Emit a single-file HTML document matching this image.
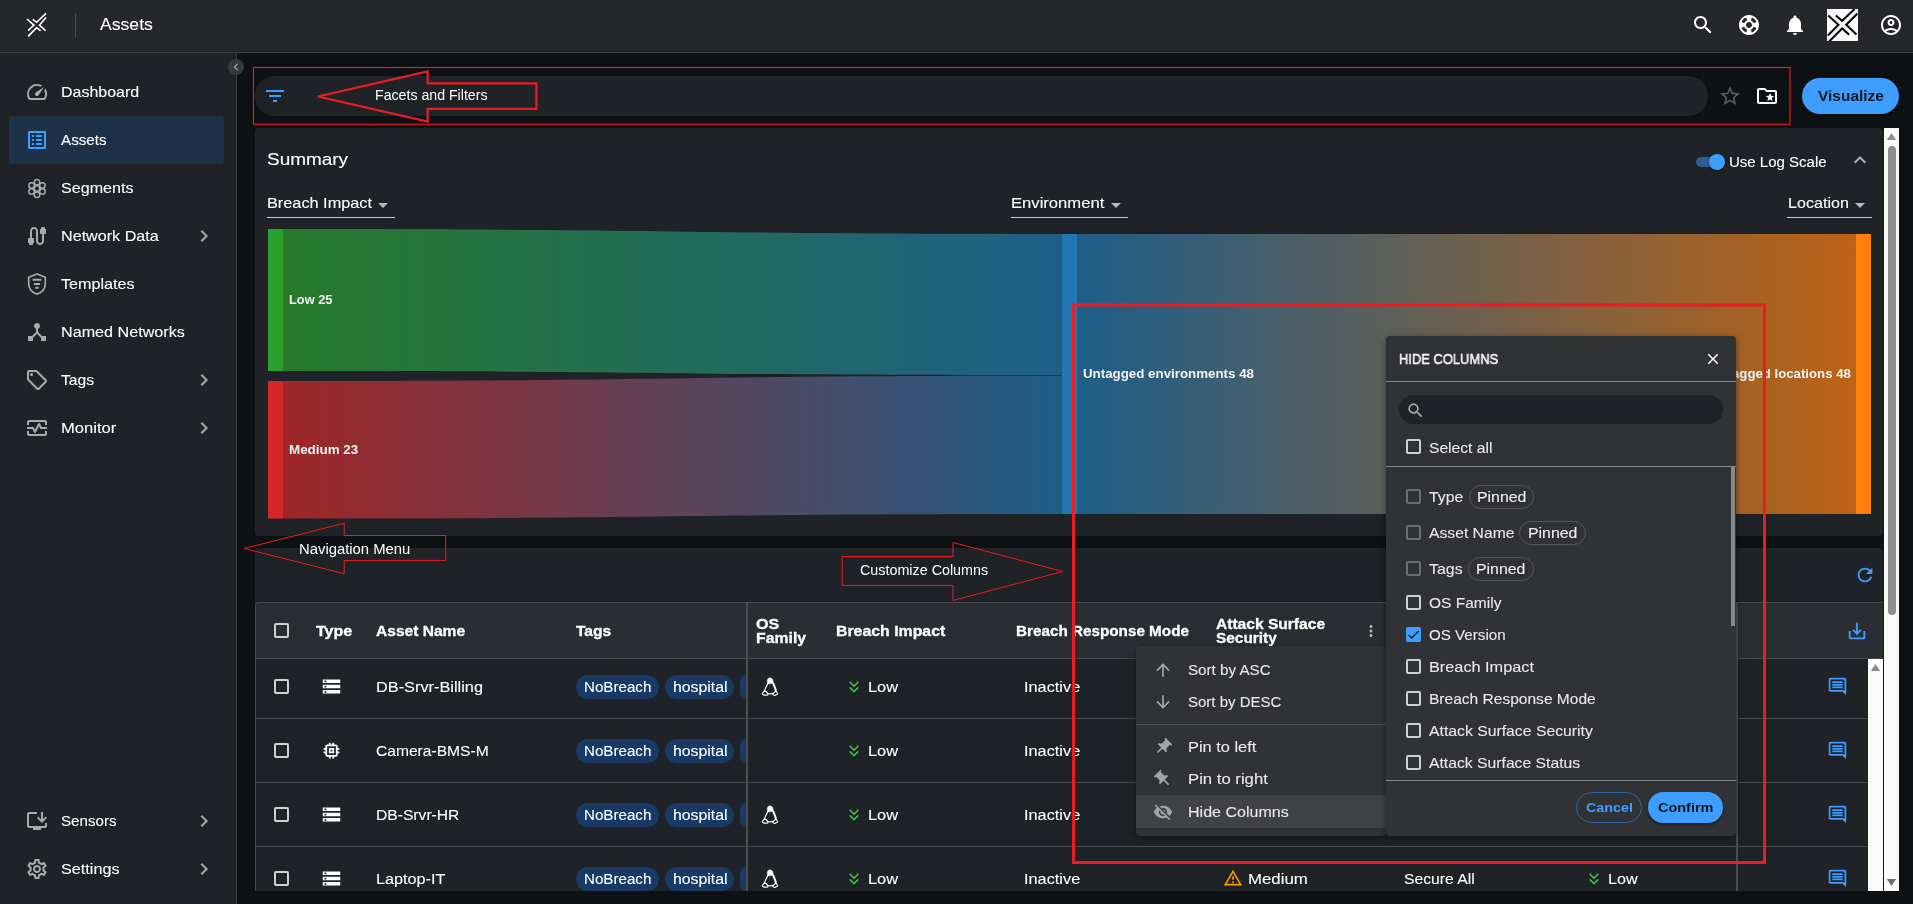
<!DOCTYPE html>
<html lang="en"><head><meta charset="utf-8"><title>Assets</title><style>
html,body{margin:0;padding:0}
body{width:1913px;height:904px;overflow:hidden;background:#0e1114;position:relative;font-family:"Liberation Sans",sans-serif;color:#fff}
.b,.i,.t,.cb{position:absolute;display:block;margin:0;padding:0}
.t{will-change:transform}
.t{white-space:nowrap;line-height:1;font-weight:400;text-decoration:none;transform-origin:0 50%;-webkit-text-stroke:.1px}
.i{overflow:visible}
.cb{width:15px;height:15px;box-sizing:border-box;border:2px solid #cfd0d1;border-radius:2px}
button.b{border:0;outline:0;background:transparent;font:inherit;text-align:left;overflow:visible}
</style></head>
<body>
<header class="b" style="left:0;top:0;width:1913px;height:52px;background:#26272b;border-bottom:1px solid #3d3e42">
<svg class="i" style="left:20px;top:6px;width:36px;height:38px" viewBox="0 0 36 38" fill="none" stroke="#fff" stroke-width="1.600" stroke-linejoin="miter">
<path d="M7.100 13.200 L13.900 19.100 L8.100 24.700"/><path d="M12.700 13.400 L16.600 16.300 L26 7.300"/><path d="M26 11.600 L19.500 19.100 L25.500 24.600"/><path d="M8.100 30.400 L16.600 21.600 L20.600 24.800"/></svg>
<div class="b" style="left:75px;top:13px;width:1px;height:24px;background:#4b4c50"></div>
<h1 class="t" style="left:100.0px;top:16.6px;font-size:16px;transform:scaleX(1.100);">Assets</h1>
<svg class="i" style="left:1690.5px;top:12.5px;width:24px;height:24px;" viewBox="0 0 24 24" fill="#fff"><path d="M15.5 14h-.79l-.28-.27C15.41 12.59 16 11.11 16 9.5 16 5.91 13.09 3 9.5 3S3 5.91 3 9.5 5.91 16 9.5 16c1.61 0 3.09-.59 4.23-1.57l.27.28v.79l5 4.99L20.49 19l-4.99-5zm-6 0C7.01 14 5 11.99 5 9.5S7.01 5 9.5 5 14 7.01 14 9.5 11.99 14 9.5 14z"/></svg>
<svg class="i" style="left:1737.0px;top:13.0px;width:24px;height:24px;" viewBox="0 0 24 24" fill="#fff"><path d="M12 2C6.48 2 2 6.48 2 12s4.48 10 10 10 10-4.48 10-10S17.52 2 12 2zm7.46 7.12l-2.78 1.15c-.51-1.36-1.58-2.44-2.95-2.94l1.15-2.78c2.1.8 3.77 2.47 4.58 4.57zM12 15c-1.66 0-3-1.34-3-3s1.34-3 3-3 3 1.34 3 3-1.34 3-3 3zM9.13 4.54l1.17 2.78c-1.38.5-2.47 1.59-2.98 2.97L4.54 9.13c.81-2.11 2.48-3.78 4.59-4.59zM4.54 14.87l2.78-1.15c.51 1.38 1.59 2.46 2.97 2.96l-1.17 2.78c-2.1-.81-3.77-2.48-4.58-4.59zm10.34 4.59l-1.15-2.78c1.37-.51 2.45-1.59 2.95-2.97l2.78 1.17c-.81 2.1-2.48 3.77-4.58 4.58z"/></svg>
<svg class="i" style="left:1783.0px;top:13.0px;width:24px;height:24px;" viewBox="0 0 24 24" fill="#fff"><path d="M12 22c1.1 0 2-.9 2-2h-4c0 1.1.89 2 2 2zm6-6v-5c0-3.07-1.64-5.64-4.5-6.32V4c0-.83-.67-1.5-1.5-1.5s-1.5.67-1.5 1.5v.68C7.63 5.36 6 7.92 6 11v5l-2 2v1h16v-1l-2-2z"/></svg>
<svg class="i" style="left:1827px;top:8.800px;width:31.300px;height:32.300px;overflow:hidden" viewBox="0 0 31.300 32.300"><rect width="31.300" height="32.300" fill="#f9f9f9"/>
<g stroke="#0a0a0a" fill="none" stroke-width="2.100"><path d="M1.200 6.500 L11.400 15.800 L0.900 26.500"/><path d="M8.800 6.500 L15.100 11.850 L27.600 0"/><path d="M30.400 4.600 L19.300 15.800 L29.500 25.600"/><path d="M2.100 32.500 L15.100 19.500 L22.100 25.600"/></g></svg>
<svg class="i" style="left:1879.0px;top:13.0px;width:24px;height:24px;" viewBox="0 0 24 24" fill="#fff"><path d="M12 2C6.48 2 2 6.48 2 12s4.48 10 10 10 10-4.48 10-10S17.52 2 12 2zM7.35 18.5C8.66 17.56 10.26 17 12 17s3.34.56 4.65 1.5c-1.31.94-2.91 1.5-4.65 1.5s-3.34-.56-4.65-1.5zm10.79-1.38C16.45 15.8 14.32 15 12 15s-4.45.8-6.14 2.12C4.7 15.73 4 13.95 4 12c0-4.42 3.58-8 8-8s8 3.58 8 8c0 1.95-.7 3.73-1.86 5.12zM12 6c-1.93 0-3.5 1.57-3.5 3.5S10.07 13 12 13s3.5-1.57 3.5-3.5S13.93 6 12 6zm0 5c-.83 0-1.5-.67-1.5-1.5S11.17 8 12 8s1.5.67 1.5 1.5S12.83 11 12 11z"/></svg>
</header>
<nav class="b" style="left:0;top:53px;width:236px;height:851px;background:#1f2226;border-right:1px solid #3a3c40">
</nav>
<div class="b" style="left:9px;top:116px;width:215px;height:48px;background:#1d3148;border-radius:4px"></div>
<svg class="i" style="left:25.0px;top:80.0px;width:24px;height:24px;" viewBox="0 0 24 24" fill="#a9aaab"><path d="M20.38 8.57l-1.230 1.850a8 8 0 0 1-.220 7.580H5.070A8 8 0 0 1 15.580 6.850l1.850-1.230A10 10 0 0 0 3.350 19a2 2 0 0 0 1.720 1h13.850a2 2 0 0 0 1.740-1 10 10 0 0 0-.270-10.440zm-9.790 6.840a2 2 0 0 0 2.830 0l5.660-8.490-8.490 5.660a2 2 0 0 0 0 2.830z"/></svg>
<a class="t" style="left:61.2px;top:83.9px;font-size:15px;transform:scaleX(1.064);">Dashboard</a>
<svg class="i" style="left:25.0px;top:128.0px;width:24px;height:24px;" viewBox="0 0 24 24" fill="#3d9eff"><path d="M11 7h6v2h-6zm0 4h6v2h-6zm0 4h6v2h-6zM7 7h2v2H7zm0 4h2v2H7zm0 4h2v2H7zM20.1 3H3.9c-.5 0-.9.4-.9.9v16.2c0 .4.4.9.9.9h16.2c.4 0 .9-.5.9-.9V3.9c0-.5-.5-.9-.9-.9zM19 19H5V5h14v14z"/></svg>
<a class="t" style="left:61.2px;top:131.9px;font-size:15px;transform:scaleX(1.013);">Assets</a>
<svg class="i" style="left:27px;top:177.5px;width:20px;height:21px" viewBox="0 0 20 21" fill="none" stroke="#a9aaab" stroke-width="1.500"><circle cx="10" cy="10.500" r="2.750"/><circle cx="10" cy="4.300" r="2.750"/><circle cx="10" cy="16.700" r="2.750"/><circle cx="4.600" cy="7.400" r="2.750"/><circle cx="15.400" cy="7.400" r="2.750"/><circle cx="4.600" cy="13.600" r="2.750"/><circle cx="15.400" cy="13.600" r="2.750"/></svg>
<a class="t" style="left:61.2px;top:179.9px;font-size:15px;transform:scaleX(1.073);">Segments</a>
<svg class="i" style="left:25.0px;top:224.0px;width:24px;height:24px;" viewBox="0 0 24 24" fill="#a9aaab"><path d="M20 5V4c0-.55-.45-1-1-1h-2c-.55 0-1 .45-1 1v1h-1v4c0 .55.45 1 1 1h1v7c0 1.100-.9 2-2 2s-2-.9-2-2V7c0-2.210-1.790-4-4-4S5 4.790 5 7v7H4c-.55 0-1 .45-1 1v4h1v1c0 .55.45 1 1 1h2c.55 0 1-.45 1-1v-1h1v-4c0-.55-.45-1-1-1H7V7c0-1.100.9-2 2-2s2 .9 2 2v10c0 2.210 1.790 4 4 4s4-1.790 4-4v-7h1c.55 0 1-.45 1-1V5h-1z"/></svg>
<a class="t" style="left:61.2px;top:227.9px;font-size:15px;transform:scaleX(1.076);">Network Data</a>
<svg class="i" style="left:192.0px;top:224.0px;width:24px;height:24px;" viewBox="0 0 24 24" fill="#a9aaab"><path d="M10 6L8.59 7.41 13.17 12l-4.58 4.59L10 18l6-6z"/></svg>
<svg class="i" style="left:26px;top:272px;width:22px;height:24px" viewBox="0 0 22 24" fill="none" stroke="#a9aaab" stroke-width="1.700"><path d="M11 2 L19.300 5.300 V11.500 C19.300 16.700 15.800 20.500 11 22.100 C6.200 20.500 2.700 16.700 2.700 11.500 V5.300 Z" stroke-linejoin="round"/><path d="M6.600 7.700 H15.400 M7.900 11.900 H14.100 M9.300 15.800 H12.700" stroke-width="2"/></svg>
<a class="t" style="left:61.2px;top:275.9px;font-size:15px;transform:scaleX(1.076);">Templates</a>
<svg class="i" style="left:25.0px;top:320.0px;width:24px;height:24px;" viewBox="0 0 24 24" fill="#a9aaab"><path d="M17 16l-4-4V8.820C14.160 8.400 15 7.300 15 6c0-1.660-1.340-3-3-3S9 4.340 9 6c0 1.300.84 2.400 2 2.820V12l-4 4H3v5h5v-3.050l4-4.200 4 4.200V21h5v-5h-4z"/></svg>
<a class="t" style="left:61.2px;top:323.9px;font-size:15px;transform:scaleX(1.076);">Named Networks</a>
<svg class="i" style="left:25.0px;top:368.0px;width:24px;height:24px;" viewBox="0 0 24 24" fill="#a9aaab"><path d="M21.41 11.58l-9-9C12.05 2.220 11.550 2 11 2H4c-1.100 0-2 .9-2 2v7c0 .55.22 1.050.59 1.420l9 9c.36.36.86.58 1.410.58s1.050-.22 1.410-.59l7-7c.37-.36.59-.86.59-1.410s-.23-1.060-.59-1.420zM13 20.010L4 11V4h7v-.01l9 9-7 7.020z M6.500 5a1.500 1.500 0 1 0 0 3 1.500 1.500 0 0 0 0-3z"/></svg>
<a class="t" style="left:61.2px;top:371.9px;font-size:15px;transform:scaleX(1.048);">Tags</a>
<svg class="i" style="left:192.0px;top:368.0px;width:24px;height:24px;" viewBox="0 0 24 24" fill="#a9aaab"><path d="M10 6L8.59 7.41 13.17 12l-4.58 4.59L10 18l6-6z"/></svg>
<svg class="i" style="left:25.0px;top:416.0px;width:24px;height:24px;" viewBox="0 0 24 24" fill="#a9aaab"><path d="M20 4H4c-1.100 0-2 .9-2 2v3h2V6h16v3h2V6c0-1.100-.9-2-2-2zM20 18H4v-3H2v3c0 1.100.9 2 2 2h16c1.100 0 2-.9 2-2v-3h-2v3z M14.890 7.550c-.34-.68-1.450-.68-1.790 0L10 13.760l-1.110-2.210A.988.988 0 0 0 8 11H2v2h5.380l1.720 3.450c.18.34.52.55.9.55s.72-.21.890-.55L14 10.240l1.110 2.210c.17.34.51.55.89.55h6v-2h-5.380l-1.730-3.450z"/></svg>
<a class="t" style="left:61.2px;top:419.9px;font-size:15px;transform:scaleX(1.105);">Monitor</a>
<svg class="i" style="left:192.0px;top:416.0px;width:24px;height:24px;" viewBox="0 0 24 24" fill="#a9aaab"><path d="M10 6L8.59 7.41 13.17 12l-4.58 4.59L10 18l6-6z"/></svg>
<svg class="i" style="left:25.0px;top:809.0px;width:24px;height:24px;" viewBox="0 0 24 24" fill="#a9aaab"><path d="M20 17H4V5h8V3H4c-1.110 0-2 .89-2 2v12c0 1.100.89 2 2 2h4v2h8v-2h4c1.100 0 2-.9 2-2v-3h-2v3z M17 14l5-5-1.410-1.410L18 10.170V3h-2v7.170l-2.590-2.580L12 9z"/></svg>
<a class="t" style="left:61.2px;top:812.9px;font-size:15px;transform:scaleX(1.009);">Sensors</a>
<svg class="i" style="left:192.0px;top:809.0px;width:24px;height:24px;" viewBox="0 0 24 24" fill="#a9aaab"><path d="M10 6L8.59 7.41 13.17 12l-4.58 4.59L10 18l6-6z"/></svg>
<svg class="i" style="left:25.0px;top:857.0px;width:24px;height:24px;" viewBox="0 0 24 24" fill="#a9aaab"><path d="M19.43 12.98c.04-.32.07-.64.07-.98 0-.34-.03-.66-.07-.98l2.110-1.650c.19-.15.24-.42.12-.64l-2-3.460c-.09-.16-.26-.25-.44-.25-.06 0-.12.01-.17.03l-2.490 1c-.52-.4-1.080-.73-1.690-.98l-.38-2.650C14.460 2.180 14.250 2 14 2h-4c-.25 0-.46.18-.49.42l-.38 2.650c-.61.25-1.170.59-1.690.98l-2.490-1c-.06-.02-.12-.03-.18-.03-.17 0-.34.09-.43.25l-2 3.460c-.13.22-.07.49.12.64l2.110 1.650c-.04.32-.07.65-.07.98 0 .33.03.66.07.98l-2.110 1.650c-.19.15-.24.42-.12.64l2 3.460c.09.16.26.25.44.25.06 0 .12-.01.17-.03l2.490-1c.52.4 1.080.73 1.690.98l.38 2.650c.03.24.24.42.49.42h4c.25 0 .46-.18.49-.42l.38-2.650c.61-.25 1.170-.59 1.690-.98l2.490 1c.06.02.12.03.18.03.17 0 .34-.09.43-.25l2-3.460c.12-.22.07-.49-.12-.64l-2.110-1.650zm-1.980-1.710c.04.31.05.52.05.73 0 .21-.02.43-.05.73l-.14 1.130.89.7 1.080.84-.7 1.210-1.270-.51-1.040-.42-.9.68c-.43.32-.84.56-1.250.73l-1.060.43-.16 1.130-.2 1.350h-1.400l-.19-1.350-.16-1.130-1.060-.43c-.43-.18-.83-.41-1.230-.71l-.91-.7-1.060.43-1.270.51-.7-1.210 1.080-.84.89-.7-.14-1.130c-.03-.31-.05-.54-.05-.74s.02-.43.05-.73l.14-1.130-.89-.7-1.080-.84.7-1.210 1.270.51 1.040.42.9-.68c.43-.32.84-.56 1.250-.73l1.060-.43.16-1.130.2-1.350h1.390l.19 1.350.16 1.130 1.060.43c.43.18.83.41 1.230.71l.91.7 1.060-.43 1.270-.51.7 1.210-1.070.85-.89.7.14 1.130zM12 8c-2.210 0-4 1.790-4 4s1.790 4 4 4 4-1.790 4-4-1.790-4-4-4zm0 6c-1.100 0-2-.9-2-2s.9-2 2-2 2 .9 2 2-.9 2-2 2z"/></svg>
<a class="t" style="left:61.2px;top:860.9px;font-size:15px;transform:scaleX(1.079);">Settings</a>
<svg class="i" style="left:192.0px;top:857.0px;width:24px;height:24px;" viewBox="0 0 24 24" fill="#a9aaab"><path d="M10 6L8.59 7.41 13.17 12l-4.58 4.59L10 18l6-6z"/></svg>
<div class="b" style="left:227.8px;top:58.9px;width:16.0px;height:16.000000000000007px;background:#37393c;border-radius:50%"></div>
<svg class="i" style="left:228.6px;top:60.0px;width:14px;height:14px;" viewBox="0 0 24 24" fill="#a9aaab"><path d="M15.41 7.41L14 6l-6 6 6 6 1.41-1.41L10.83 12z"/></svg>
<div class="b" style="left:255px;top:76px;width:1453px;height:40px;background:#1f2226;border-radius:20px"></div>
<svg class="i" style="left:263.0px;top:84.0px;width:24px;height:24px;" viewBox="0 0 24 24" fill="#3d9eff"><path d="M10 18h4v-2h-4v2zM3 6v2h18V6H3zm3 7h12v-2H6v2z"/></svg>
<svg class="i" style="left:1718.0px;top:84.0px;width:24px;height:24px;" viewBox="0 0 24 24" fill="#5d5e60"><path d="M22 9.24l-7.19-.62L12 2 9.19 8.63 2 9.24l5.46 4.73L5.82 21 12 17.27 18.18 21l-1.63-7.03L22 9.24zM12 15.4l-3.76 2.27 1-4.28-3.32-2.88 4.38-.38L12 6.1l1.71 4.04 4.38.38-3.32 2.88 1 4.28L12 15.4z"/></svg>
<svg class="i" style="left:1755.0px;top:84.0px;width:24px;height:24px;" viewBox="0 0 24 24" fill="#fff"><path d="M20 6h-8l-2-2H4c-1.1 0-1.99.9-1.99 2L2 18c0 1.1.9 2 2 2h16c1.1 0 2-.9 2-2V8c0-1.1-.9-2-2-2zm0 12H4V6h5.17l2 2H20v10zm-6.92-3.96L12.39 17 15 15.47 17.61 17l-.69-2.96 2.3-1.99-3.03-.26L15 9l-1.19 2.79-3.03.26z"/></svg>
<button class="b" style="left:1802px;top:78px;width:97px;height:36px;background:#3d9eff;border-radius:18px;box-shadow:0 2px 3px rgba(0,0,0,.4)"><span class="t" style="left:16.0px;top:10.0px;font-size:15px;font-weight:700;-webkit-text-stroke:0;color:#10161d;transform:scaleX(1.032);">Visualize</span></button>
<section class="b" style="left:255px;top:128px;width:1628px;height:408px;background:#1f2226;border-radius:4px"></section>
<h2 class="t" style="left:266.9px;top:150.6px;font-size:17px;transform:scaleX(1.115);">Summary</h2>
<div class="b" style="left:1696px;top:157px;width:27px;height:10px;background:#2c5f94;border-radius:5px"></div>
<div class="b" style="left:1709px;top:154px;width:16px;height:16px;background:#3d9eff;border-radius:50%;box-shadow:0 1px 2px rgba(0,0,0,.5)"></div>
<span class="t" style="left:1729.2px;top:154.7px;font-size:14px;transform:scaleX(1.072);">Use Log Scale</span>
<svg class="i" style="left:1848.0px;top:148.0px;width:24px;height:24px;" viewBox="0 0 24 24" fill="#b4b5b6"><path d="M12 8l-6 6 1.41 1.41L12 10.83l4.59 4.58L18 14z"/></svg>
<span class="t" style="left:266.7px;top:195.6px;font-size:14.5px;transform:scaleX(1.123);">Breach Impact</span>
<svg class="i" style="left:371.0px;top:193.0px;width:24px;height:24px;" viewBox="0 0 24 24" fill="#b9babb"><path d="M7 10l5 5 5-5z"/></svg>
<div class="b" style="left:267px;top:217px;width:128px;height:1px;background:#cdcdce"></div>
<span class="t" style="left:1011.2px;top:195.6px;font-size:14.5px;transform:scaleX(1.146);">Environment</span>
<svg class="i" style="left:1104.0px;top:193.0px;width:24px;height:24px;" viewBox="0 0 24 24" fill="#b9babb"><path d="M7 10l5 5 5-5z"/></svg>
<div class="b" style="left:1011px;top:217px;width:117px;height:1px;background:#cdcdce"></div>
<span class="t" style="left:1787.6px;top:195.6px;font-size:14.5px;transform:scaleX(1.111);">Location</span>
<svg class="i" style="left:1848.0px;top:193.0px;width:24px;height:24px;" viewBox="0 0 24 24" fill="#b9babb"><path d="M7 10l5 5 5-5z"/></svg>
<div class="b" style="left:1787px;top:217px;width:85px;height:1px;background:#cdcdce"></div>
<svg class="i" style="left:255px;top:220px;width:1628px;height:310px" viewBox="255 220 1628 310">
<defs><linearGradient id="g1" x1="283" x2="1062" y1="0" y2="0" gradientUnits="userSpaceOnUse"><stop offset="0" stop-color="#287a2a"/><stop offset="1" stop-color="#1f5e89"/></linearGradient><linearGradient id="g2" x1="283" x2="1062" y1="0" y2="0" gradientUnits="userSpaceOnUse"><stop offset="0" stop-color="#9f2627"/><stop offset="1" stop-color="#1f5e89"/></linearGradient><linearGradient id="g3" x1="1077" x2="1856" y1="0" y2="0" gradientUnits="userSpaceOnUse"><stop offset="0" stop-color="#1f5e89"/><stop offset="1" stop-color="#bc6315"/></linearGradient></defs>
<path fill="url(#g1)" d="M283 229 C672.5 229 672.5 234 1062 234 V375.300 C672.500 375.300 672.500 371 283 371 Z"/>
<path fill="url(#g2)" d="M283 381 C672.500 381 672.500 375.700 1062 375.700 V514 C672.500 514 672.500 518.600 283 518.600 Z"/>
<path fill="url(#g3)" d="M1077 234 H1856 V514 H1077 Z"/>
<rect x="268" y="229" width="15" height="142" fill="#2ca02c"/><rect x="268" y="381" width="15" height="137.600" fill="#d62728"/><rect x="1062" y="234" width="15" height="280" fill="#1f77b4"/><rect x="1856" y="234" width="15" height="280" fill="#ff7f0e"/>
</svg>
<span class="t" style="left:289.0px;top:294.0px;font-size:12px;font-weight:700;-webkit-text-stroke:0;color:#f3f3f3;transform:scaleX(1.069);">Low 25</span>
<span class="t" style="left:289.0px;top:443.8px;font-size:12px;font-weight:700;-webkit-text-stroke:0;color:#f3f3f3;transform:scaleX(1.117);">Medium 23</span>
<span class="t" style="left:1082.7px;top:368.0px;font-size:12px;font-weight:700;-webkit-text-stroke:0;color:#f3f3f3;transform:scaleX(1.110);">Untagged environments 48</span>
<span class="t" style="left:1710.2px;top:368.0px;font-size:12px;font-weight:700;-webkit-text-stroke:0;color:#f3f3f3;transform:scaleX(1.100);">Untagged locations 48</span>
<section class="b" style="left:255px;top:548px;width:1628px;height:343px;background:#1f2226;border-radius:4px 4px 0 0"></section>
<svg class="i" style="left:1853.5px;top:564.0px;width:22px;height:22px;" viewBox="0 0 24 24" fill="#3d9eff"><path d="M17.65 6.35C16.2 4.9 14.21 4 12 4c-4.42 0-7.99 3.58-7.99 8s3.57 8 7.99 8c3.73 0 6.84-2.55 7.73-6h-2.08c-.82 2.33-3.04 4-5.65 4-3.31 0-6-2.69-6-6s2.69-6 6-6c1.66 0 3.14.69 4.22 1.78L13 11h7V4l-2.35 2.35z"/></svg>
<div class="b" style="left:255px;top:602px;width:1628px;height:57px;background:#2a2d31;border-top:1px solid #47494d;border-bottom:1px solid #47494d;border-left:1px solid #47494d;box-sizing:border-box;border-radius:4px 0 0 0"></div>
<div class="b" style="left:255px;top:658px;width:1px;height:233px;background:#47494d"></div>
<div class="b" style="left:256px;top:718px;width:1612px;height:1px;background:#47494d"></div>
<div class="b" style="left:256px;top:782px;width:1612px;height:1px;background:#47494d"></div>
<div class="b" style="left:256px;top:846px;width:1612px;height:1px;background:#47494d"></div>
<div class="b" style="left:746px;top:603px;width:2px;height:288px;background:#4b4d51"></div>
<div class="b" style="left:1736px;top:603px;width:2px;height:288px;background:#4b4d51"></div>
<span class="cb" style="left:273.5px;top:623.0px;border-color:#cfd0d1"></span>
<span class="t" style="left:315.7px;top:623.0px;font-size:15px;font-weight:700;-webkit-text-stroke:.3px;transform:scaleX(1.071);">Type</span>
<span class="t" style="left:375.7px;top:623.0px;font-size:15px;font-weight:700;-webkit-text-stroke:.3px;transform:scaleX(1.037);">Asset Name</span>
<span class="t" style="left:576.0px;top:623.0px;font-size:15px;font-weight:700;-webkit-text-stroke:.3px;transform:scaleX(1.038);">Tags</span>
<span class="t" style="left:755.7px;top:616.0px;font-size:15px;font-weight:700;-webkit-text-stroke:.3px;transform:scaleX(1.074);">OS</span>
<span class="t" style="left:755.7px;top:629.8px;font-size:15px;font-weight:700;-webkit-text-stroke:.3px;transform:scaleX(1.054);">Family</span>
<span class="t" style="left:835.7px;top:623.0px;font-size:15px;font-weight:700;-webkit-text-stroke:.3px;transform:scaleX(1.057);">Breach Impact</span>
<span class="t" style="left:1015.9px;top:623.0px;font-size:15px;font-weight:700;-webkit-text-stroke:.3px;transform:scaleX(1.017);">Breach Response Mode</span>
<span class="t" style="left:1216.0px;top:615.8px;font-size:15px;font-weight:700;-webkit-text-stroke:.3px;transform:scaleX(1.038);">Attack Surface</span>
<span class="t" style="left:1216.0px;top:629.6px;font-size:15px;font-weight:700;-webkit-text-stroke:.3px;transform:scaleX(1.027);">Security</span>
<svg class="i" style="left:1361.6px;top:622.0px;width:18px;height:18px;" viewBox="0 0 24 24" fill="#b4b5b6"><path d="M12 8c1.1 0 2-.9 2-2s-.9-2-2-2-2 .9-2 2 .9 2 2 2zm0 2c-1.1 0-2 .9-2 2s.9 2 2 2 2-.9 2-2-.9-2-2-2zm0 6c-1.1 0-2 .9-2 2s.9 2 2 2 2-.9 2-2-.9-2-2-2z"/></svg>
<svg class="i" style="left:1846.0px;top:620.0px;width:22px;height:22px;" viewBox="0 0 24 24" fill="#3d9eff"><path d="M19 12v7H5v-7H3v7c0 1.100.9 2 2 2h14c1.100 0 2-.9 2-2v-7h-2zm-6 .67l2.590-2.580L17 11.500l-5 5-5-5 1.410-1.410L11 12.670V3h2v9.670z"/></svg>
<div class="b" style="left:256px;top:659px;width:1612px;height:232px;overflow:hidden">
<span class="cb" style="left:17.5px;top:20.0px;border-color:#cfd0d1"></span>
<svg class="i" style="left:64.5px;top:17.0px;width:21px;height:21px;" viewBox="0 0 24 24" fill="#fff"><path d="M2 20h20v-4H2v4zm2-3h2v2H4v-2zM2 4v4h20V4H2zm4 3H4V5h2v2zm-4 7h20v-4H2v4zm2-3h2v2H4v-2z"/></svg>
<span class="t" style="left:119.7px;top:19.9px;font-size:15.5px;transform:scaleX(1.053);">DB-Srvr-Billing</span>
<div class="b" style="left:320px;top:15.5px;width:83px;height:24.0px;background:#173b65;border-radius:12px"></div>
<span class="t" style="left:328.0px;top:20.6px;font-size:14px;transform:scaleX(1.082);">NoBreach</span>
<div class="b" style="left:409px;top:15.5px;width:69px;height:24.0px;background:#173b65;border-radius:12px"></div>
<span class="t" style="left:416.5px;top:20.6px;font-size:14px;transform:scaleX(1.129);">hospital</span>
<div class="b" style="left:484px;top:15.5px;width:6px;height:24.0px;background:#173b65;border-radius:12px 0 0 12px"></div>
<svg class="i" style="left:500px;top:15.0px;width:28px;height:26px" viewBox="0 0 28 26" fill="none" stroke="#fff" stroke-width="1.100" stroke-linejoin="round" stroke-linecap="round"><path d="M11.700 9.700 C10.900 6.200 11.400 3.900 14 3.900 C16.600 3.900 17.100 6 17 8 L17.500 10.200 C16.200 8.900 14.400 8.900 13.400 10.100 C12.800 9.400 12.200 9.400 11.700 9.700 Z" fill="#fff" stroke-width=".6"/><path d="M11.900 9.300 C10.700 12.200 8.900 14.600 8.400 17.100"/><path d="M17.300 9.600 C18.300 12 19.700 14.600 19.900 17.300" stroke-width="2"/><path d="M11.600 19.400 C13.200 20 15.400 20 17 19.200"/><path d="M8.400 16.900 L6.300 19.500 C6.700 21.200 10 21.700 12 20.700 C11.500 18.900 10.100 17.200 8.400 16.900 Z"/><path d="M20.100 17.300 L21.800 19.500 C21 21.400 18 21.900 16.800 20.700 C17.300 19.200 18.400 17.800 20.100 17.300 Z"/></svg>
<svg class="i" style="left:588.0px;top:17.8px;width:20px;height:20px;" viewBox="0 0 24 24" fill="#3fbf4f"><path d="M18 6.41L16.59 5 12 9.58 7.41 5 6 6.41l6 6z M18 13l-1.41-1.41L12 16.17l-4.59-4.58L6 13l6 6z"/></svg>
<span class="t" style="left:612.2px;top:20.0px;font-size:15.5px;transform:scaleX(1.058);">Low</span>
<span class="t" style="left:767.9px;top:20.0px;font-size:15.5px;transform:scaleX(1.052);">Inactive</span>
<svg class="i" style="left:1570.8px;top:16.7px;width:21px;height:21px;" viewBox="0 0 24 24" fill="#3d9eff"><path d="M21.99 4c0-1.1-.89-2-1.99-2H4c-1.1 0-2 .9-2 2v12c0 1.1.9 2 2 2h14l4 4-.01-18zM20 4v13.170L18.830 16H4V4h16zM6 12h12v2H6zm0-3h12v2H6zm0-3h12v2H6z"/></svg>
<span class="cb" style="left:17.5px;top:84.0px;border-color:#cfd0d1"></span>
<svg class="i" style="left:64.5px;top:81.0px;width:21px;height:21px;" viewBox="0 0 24 24" fill="#fff"><path d="M15 9H9v6h6V9zm-2 4h-2v-2h2v2zm8-2V9h-2V7c0-1.100-.9-2-2-2h-2V3h-2v2h-2V3H9v2H7c-1.100 0-2 .9-2 2v2H3v2h2v2H3v2h2v2c0 1.100.9 2 2 2h2v2h2v-2h2v2h2v-2h2c1.100 0 2-.9 2-2v-2h2v-2h-2v-2h2zm-4 6H7V7h10v10z"/></svg>
<span class="t" style="left:119.7px;top:83.9px;font-size:15.5px;transform:scaleX(1.006);">Camera-BMS-M</span>
<div class="b" style="left:320px;top:79.5px;width:83px;height:24.0px;background:#173b65;border-radius:12px"></div>
<span class="t" style="left:328.0px;top:84.6px;font-size:14px;transform:scaleX(1.082);">NoBreach</span>
<div class="b" style="left:409px;top:79.5px;width:69px;height:24.0px;background:#173b65;border-radius:12px"></div>
<span class="t" style="left:416.5px;top:84.6px;font-size:14px;transform:scaleX(1.129);">hospital</span>
<div class="b" style="left:484px;top:79.5px;width:6px;height:24.0px;background:#173b65;border-radius:12px 0 0 12px"></div>
<svg class="i" style="left:588.0px;top:81.8px;width:20px;height:20px;" viewBox="0 0 24 24" fill="#3fbf4f"><path d="M18 6.41L16.59 5 12 9.58 7.41 5 6 6.41l6 6z M18 13l-1.41-1.41L12 16.17l-4.59-4.58L6 13l6 6z"/></svg>
<span class="t" style="left:612.2px;top:84.0px;font-size:15.5px;transform:scaleX(1.058);">Low</span>
<span class="t" style="left:767.9px;top:84.0px;font-size:15.5px;transform:scaleX(1.052);">Inactive</span>
<svg class="i" style="left:1570.8px;top:80.7px;width:21px;height:21px;" viewBox="0 0 24 24" fill="#3d9eff"><path d="M21.99 4c0-1.1-.89-2-1.99-2H4c-1.1 0-2 .9-2 2v12c0 1.1.9 2 2 2h14l4 4-.01-18zM20 4v13.170L18.830 16H4V4h16zM6 12h12v2H6zm0-3h12v2H6zm0-3h12v2H6z"/></svg>
<span class="cb" style="left:17.5px;top:148.0px;border-color:#cfd0d1"></span>
<svg class="i" style="left:64.5px;top:145.0px;width:21px;height:21px;" viewBox="0 0 24 24" fill="#fff"><path d="M2 20h20v-4H2v4zm2-3h2v2H4v-2zM2 4v4h20V4H2zm4 3H4V5h2v2zm-4 7h20v-4H2v4zm2-3h2v2H4v-2z"/></svg>
<span class="t" style="left:119.7px;top:147.9px;font-size:15.5px;transform:scaleX(1.009);">DB-Srvr-HR</span>
<div class="b" style="left:320px;top:143.5px;width:83px;height:24.0px;background:#173b65;border-radius:12px"></div>
<span class="t" style="left:328.0px;top:148.6px;font-size:14px;transform:scaleX(1.082);">NoBreach</span>
<div class="b" style="left:409px;top:143.5px;width:69px;height:24.0px;background:#173b65;border-radius:12px"></div>
<span class="t" style="left:416.5px;top:148.6px;font-size:14px;transform:scaleX(1.129);">hospital</span>
<div class="b" style="left:484px;top:143.5px;width:6px;height:24.0px;background:#173b65;border-radius:12px 0 0 12px"></div>
<svg class="i" style="left:500px;top:143.0px;width:28px;height:26px" viewBox="0 0 28 26" fill="none" stroke="#fff" stroke-width="1.100" stroke-linejoin="round" stroke-linecap="round"><path d="M11.700 9.700 C10.900 6.200 11.400 3.900 14 3.900 C16.600 3.900 17.100 6 17 8 L17.500 10.200 C16.200 8.900 14.400 8.900 13.400 10.100 C12.800 9.400 12.200 9.400 11.700 9.700 Z" fill="#fff" stroke-width=".6"/><path d="M11.900 9.300 C10.700 12.200 8.900 14.600 8.400 17.100"/><path d="M17.300 9.600 C18.300 12 19.700 14.600 19.900 17.300" stroke-width="2"/><path d="M11.600 19.400 C13.200 20 15.400 20 17 19.200"/><path d="M8.400 16.900 L6.300 19.500 C6.700 21.200 10 21.700 12 20.700 C11.500 18.900 10.100 17.200 8.400 16.900 Z"/><path d="M20.100 17.300 L21.800 19.500 C21 21.400 18 21.900 16.800 20.700 C17.300 19.200 18.400 17.800 20.100 17.300 Z"/></svg>
<svg class="i" style="left:588.0px;top:145.8px;width:20px;height:20px;" viewBox="0 0 24 24" fill="#3fbf4f"><path d="M18 6.41L16.59 5 12 9.58 7.41 5 6 6.41l6 6z M18 13l-1.41-1.41L12 16.17l-4.59-4.58L6 13l6 6z"/></svg>
<span class="t" style="left:612.2px;top:148.0px;font-size:15.5px;transform:scaleX(1.058);">Low</span>
<span class="t" style="left:767.9px;top:148.0px;font-size:15.5px;transform:scaleX(1.052);">Inactive</span>
<svg class="i" style="left:1570.8px;top:144.7px;width:21px;height:21px;" viewBox="0 0 24 24" fill="#3d9eff"><path d="M21.99 4c0-1.1-.89-2-1.99-2H4c-1.1 0-2 .9-2 2v12c0 1.1.9 2 2 2h14l4 4-.01-18zM20 4v13.170L18.830 16H4V4h16zM6 12h12v2H6zm0-3h12v2H6zm0-3h12v2H6z"/></svg>
<span class="cb" style="left:17.5px;top:212.0px;border-color:#cfd0d1"></span>
<svg class="i" style="left:64.5px;top:209.0px;width:21px;height:21px;" viewBox="0 0 24 24" fill="#fff"><path d="M2 20h20v-4H2v4zm2-3h2v2H4v-2zM2 4v4h20V4H2zm4 3H4V5h2v2zm-4 7h20v-4H2v4zm2-3h2v2H4v-2z"/></svg>
<span class="t" style="left:119.7px;top:211.9px;font-size:15.5px;transform:scaleX(1.044);">Laptop-IT</span>
<div class="b" style="left:320px;top:207.5px;width:83px;height:24.0px;background:#173b65;border-radius:12px"></div>
<span class="t" style="left:328.0px;top:212.6px;font-size:14px;transform:scaleX(1.082);">NoBreach</span>
<div class="b" style="left:409px;top:207.5px;width:69px;height:24.0px;background:#173b65;border-radius:12px"></div>
<span class="t" style="left:416.5px;top:212.6px;font-size:14px;transform:scaleX(1.129);">hospital</span>
<div class="b" style="left:484px;top:207.5px;width:6px;height:24.0px;background:#173b65;border-radius:12px 0 0 12px"></div>
<svg class="i" style="left:500px;top:207.0px;width:28px;height:26px" viewBox="0 0 28 26" fill="none" stroke="#fff" stroke-width="1.100" stroke-linejoin="round" stroke-linecap="round"><path d="M11.700 9.700 C10.900 6.200 11.400 3.900 14 3.900 C16.600 3.900 17.100 6 17 8 L17.500 10.200 C16.200 8.900 14.400 8.900 13.400 10.100 C12.800 9.400 12.200 9.400 11.700 9.700 Z" fill="#fff" stroke-width=".6"/><path d="M11.900 9.300 C10.700 12.200 8.900 14.600 8.400 17.100"/><path d="M17.300 9.600 C18.300 12 19.700 14.600 19.900 17.300" stroke-width="2"/><path d="M11.600 19.400 C13.200 20 15.400 20 17 19.200"/><path d="M8.400 16.900 L6.300 19.500 C6.700 21.200 10 21.700 12 20.700 C11.500 18.900 10.100 17.200 8.400 16.900 Z"/><path d="M20.100 17.300 L21.800 19.500 C21 21.400 18 21.900 16.800 20.700 C17.300 19.200 18.400 17.800 20.100 17.300 Z"/></svg>
<svg class="i" style="left:588.0px;top:209.8px;width:20px;height:20px;" viewBox="0 0 24 24" fill="#3fbf4f"><path d="M18 6.41L16.59 5 12 9.58 7.41 5 6 6.41l6 6z M18 13l-1.41-1.41L12 16.17l-4.59-4.58L6 13l6 6z"/></svg>
<span class="t" style="left:612.2px;top:212.0px;font-size:15.5px;transform:scaleX(1.058);">Low</span>
<span class="t" style="left:767.9px;top:212.0px;font-size:15.5px;transform:scaleX(1.052);">Inactive</span>
<svg class="i" style="left:967.3px;top:209.0px;width:20px;height:20px;" viewBox="0 0 24 24" fill="#ff9800"><path d="M12 5.99L19.53 19H4.47L12 5.990M12 2L1 21h22L12 2zm1 14h-2v2h2v-2zm0-6h-2v4h2v-4z"/></svg>
<span class="t" style="left:992.2px;top:212.0px;font-size:15.5px;transform:scaleX(1.084);">Medium</span>
<span class="t" style="left:1147.6px;top:212.0px;font-size:15.5px;transform:scaleX(1.012);">Secure All</span>
<svg class="i" style="left:1328.0px;top:209.8px;width:20px;height:20px;" viewBox="0 0 24 24" fill="#3fbf4f"><path d="M18 6.41L16.59 5 12 9.58 7.41 5 6 6.41l6 6z M18 13l-1.41-1.41L12 16.17l-4.59-4.58L6 13l6 6z"/></svg>
<span class="t" style="left:1352.2px;top:212.0px;font-size:15.5px;transform:scaleX(1.041);">Low</span>
<svg class="i" style="left:1570.8px;top:208.7px;width:21px;height:21px;" viewBox="0 0 24 24" fill="#3d9eff"><path d="M21.99 4c0-1.1-.89-2-1.99-2H4c-1.1 0-2 .9-2 2v12c0 1.1.9 2 2 2h14l4 4-.01-18zM20 4v13.170L18.830 16H4V4h16zM6 12h12v2H6zm0-3h12v2H6zm0-3h12v2H6z"/></svg>
</div>
<div class="b" style="left:1868px;top:659px;width:15px;height:232px;background:#fafafa"></div>
<svg class="i" style="left:1870px;top:663px;width:11px;height:9px" viewBox="0 0 11 9"><path d="M5.500 1 L10.200 8 H0.800 Z" fill="#8d8d8d"/></svg>
<div class="b" style="left:1883px;top:128px;width:1px;height:763px;background:#16191c"></div>
<div class="b" style="left:1884px;top:128px;width:15px;height:763px;background:#fafafa"></div>
<div class="b" style="left:1887.5px;top:146px;width:8.5px;height:469px;background:#8e8e8e;border-radius:4.5px"></div>
<svg class="i" style="left:1886px;top:132px;width:11px;height:9px" viewBox="0 0 11 9"><path d="M5.500 1 L10.200 8 H0.800 Z" fill="#8d8d8d"/></svg>
<svg class="i" style="left:1886px;top:878px;width:11px;height:9px" viewBox="0 0 11 9"><path d="M5.500 8 L10.200 1 H0.800 Z" fill="#6d6d6d"/></svg>
<div class="b" style="left:1136px;top:646px;width:250px;height:190px;background:#313236;border-radius:4px;box-shadow:0 3px 6px rgba(0,0,0,.28),0 1px 10px rgba(0,0,0,.2)">
<div class="b" style="left:0px;top:149px;width:250px;height:33px;background:#414246"></div>
<div class="b" style="left:0px;top:78px;width:250px;height:1px;background:#515256"></div>
<svg class="i" style="left:16.5px;top:13.8px;width:20px;height:20px;" viewBox="0 0 24 24" fill="#a4a5a7"><path d="M4 12l1.41 1.41L11 7.83V20h2V7.83l5.58 5.59L20 12l-8-8-8 8z"/></svg>
<span class="t" style="left:51.8px;top:15.6px;font-size:15px;color:#e9e9ea;transform:scaleX(1.012);">Sort by ASC</span>
<svg class="i" style="left:16.5px;top:46.0px;width:20px;height:20px;" viewBox="0 0 24 24" fill="#a4a5a7"><path d="M20 12l-1.41-1.41L13 16.17V4h-2v12.17l-5.58-5.59L4 12l8 8 8-8z"/></svg>
<span class="t" style="left:51.8px;top:47.8px;font-size:15px;color:#e9e9ea;">Sort by DESC</span>
<svg class="i" style="left:16.5px;top:91.2px;width:20px;height:20px;" viewBox="0 0 24 24" fill="#a4a5a7"><path transform="rotate(45 12 12)" d="M16 9V4h1c.55 0 1-.45 1-1s-.45-1-1-1H7c-.55 0-1 .45-1 1s.45 1 1 1h1v5c0 1.66-1.34 3-3 3v2h5.97v7l1 1 1-1v-7H19v-2c-1.66 0-3-1.34-3-3z"/></svg>
<span class="t" style="left:51.8px;top:93.0px;font-size:15px;color:#e9e9ea;transform:scaleX(1.092);">Pin to left</span>
<svg class="i" style="left:16.5px;top:122.8px;width:20px;height:20px;" viewBox="0 0 24 24" fill="#a4a5a7"><path transform="rotate(-45 12 12)" d="M16 9V4h1c.55 0 1-.45 1-1s-.45-1-1-1H7c-.55 0-1 .45-1 1s.45 1 1 1h1v5c0 1.66-1.34 3-3 3v2h5.97v7l1 1 1-1v-7H19v-2c-1.66 0-3-1.34-3-3z"/></svg>
<span class="t" style="left:51.8px;top:124.6px;font-size:15px;color:#e9e9ea;transform:scaleX(1.113);">Pin to right</span>
<svg class="i" style="left:16.5px;top:155.8px;width:20px;height:20px;" viewBox="0 0 24 24" fill="#a4a5a7"><path d="M12 7c2.76 0 5 2.24 5 5 0 .65-.13 1.26-.36 1.83l2.92 2.92c1.51-1.26 2.7-2.89 3.43-4.75-1.73-4.39-6-7.5-11-7.5-1.4 0-2.74.25-3.98.7l2.16 2.16C10.74 7.13 11.35 7 12 7zM2 4.27l2.28 2.28.46.46C3.08 8.3 1.78 10.02 1 12c1.73 4.39 6 7.5 11 7.5 1.55 0 3.03-.3 4.38-.84l.42.42L19.73 22 21 20.73 3.27 3 2 4.27zM7.53 9.8l1.55 1.55c-.05.21-.08.43-.08.65 0 1.66 1.34 3 3 3 .22 0 .44-.03.65-.08l1.55 1.55c-.67.33-1.41.53-2.2.53-2.76 0-5-2.24-5-5 0-.79.2-1.53.53-2.2zm4.31-.78l3.15 3.15.02-.16c0-1.66-1.34-3-3-3l-.17.01z"/></svg>
<span class="t" style="left:51.8px;top:157.6px;font-size:15px;color:#e9e9ea;transform:scaleX(1.070);">Hide Columns</span>
</div>
<div class="b" style="left:1386px;top:336px;width:349.500px;height:500px;background:#313236;border-radius:4px;box-shadow:0 3px 6px rgba(0,0,0,.28),0 1px 10px rgba(0,0,0,.2)">
<span class="t" style="-webkit-text-stroke:.55px;left:13.3px;top:16.0px;font-size:14px;color:#f4f4f4;transform:scaleX(0.924);">HIDE COLUMNS</span>
<svg class="i" style="left:318.0px;top:14.0px;width:18px;height:18px;" viewBox="0 0 24 24" fill="#fff"><path d="M19 6.41L17.59 5 12 10.59 6.41 5 5 6.41 10.59 12 5 17.59 6.41 19 12 13.41 17.59 19 19 17.59 13.41 12z"/></svg>
<div class="b" style="left:0px;top:45px;width:349.5px;height:1px;background:#86878a"></div>
<div class="b" style="left:13px;top:59px;width:324px;height:29px;background:#1f2226;border-radius:14.500px"></div>
<svg class="i" style="left:19.5px;top:64.5px;width:19px;height:19px;" viewBox="0 0 24 24" fill="#aaabad"><path d="M15.5 14h-.79l-.28-.27C15.41 12.59 16 11.11 16 9.5 16 5.91 13.09 3 9.5 3S3 5.91 3 9.5 5.91 16 9.5 16c1.61 0 3.09-.59 4.23-1.57l.27.28v.79l5 4.99L20.49 19l-4.99-5zm-6 0C7.01 14 5 11.99 5 9.5S7.01 5 9.5 5 14 7.01 14 9.5 11.99 14 9.5 14z"/></svg>
<span class="cb" style="left:20.0px;top:103.0px;border-color:#cfd0d1"></span>
<span class="t" style="left:42.8px;top:103.6px;font-size:15px;color:#e9e9ea;transform:scaleX(1.041);">Select all</span>
<div class="b" style="left:0px;top:130px;width:349.5px;height:1px;background:#86878a"></div>
<div class="b" style="left:344.5px;top:131px;width:4.5px;height:159.29999999999995px;background:#87888a"></div>
<span class="cb" style="left:20.0px;top:153.0px;border-color:#6c6d70"></span>
<span class="t" style="left:42.8px;top:152.9px;font-size:15px;color:#e9e9ea;transform:scaleX(1.051);">Type</span>
<div class="b" style="left:82.5px;top:149px;width:65.09999999999991px;height:24px;border:1px solid #55575b;border-radius:12px;box-sizing:border-box"></div><span class="t" style="left:90.9px;top:154.1px;font-size:14px;color:#f0f0f0;transform:scaleX(1.133);">Pinned</span>
<span class="cb" style="left:20.0px;top:189.0px;border-color:#6c6d70"></span>
<span class="t" style="left:42.8px;top:188.9px;font-size:15px;color:#e9e9ea;transform:scaleX(1.046);">Asset Name</span>
<div class="b" style="left:133.29999999999995px;top:185px;width:66.29999999999995px;height:24px;border:1px solid #55575b;border-radius:12px;box-sizing:border-box"></div><span class="t" style="left:141.7px;top:190.1px;font-size:14px;color:#f0f0f0;transform:scaleX(1.133);">Pinned</span>
<span class="cb" style="left:20.0px;top:224.70000000000005px;border-color:#6c6d70"></span>
<span class="t" style="left:42.8px;top:224.6px;font-size:15px;color:#e9e9ea;transform:scaleX(1.060);">Tags</span>
<div class="b" style="left:81.59999999999991px;top:220.70000000000005px;width:66.0px;height:24.0px;border:1px solid #55575b;border-radius:12px;box-sizing:border-box"></div><span class="t" style="left:90.0px;top:225.8px;font-size:14px;color:#f0f0f0;transform:scaleX(1.133);">Pinned</span>
<span class="cb" style="left:20.0px;top:259.0px;border-color:#cfd0d1"></span>
<span class="t" style="left:42.8px;top:258.9px;font-size:15px;color:#e9e9ea;transform:scaleX(1.034);">OS Family</span>
<span class="cb" style="left:20.0px;top:291.20000000000005px;border-color:#3d9eff;background:#3d9eff"></span><svg class="i" style="left:20.0px;top:291.2px;width:15px;height:15px;" viewBox="0 0 24 24" fill="#16191d"><path d="M9 16.170L4.830 12l-1.420 1.410L9 19 21 7l-1.410-1.410z"/></svg>
<span class="t" style="left:42.8px;top:291.1px;font-size:15px;color:#e9e9ea;transform:scaleX(1.010);">OS Version</span>
<span class="cb" style="left:20.0px;top:323.20000000000005px;border-color:#cfd0d1"></span>
<span class="t" style="left:42.8px;top:323.1px;font-size:15px;color:#e9e9ea;transform:scaleX(1.085);">Breach Impact</span>
<span class="cb" style="left:20.0px;top:355.0px;border-color:#cfd0d1"></span>
<span class="t" style="left:42.8px;top:354.9px;font-size:15px;color:#e9e9ea;transform:scaleX(1.036);">Breach Response Mode</span>
<span class="cb" style="left:20.0px;top:387.0px;border-color:#cfd0d1"></span>
<span class="t" style="left:42.8px;top:386.9px;font-size:15px;color:#e9e9ea;transform:scaleX(1.051);">Attack Surface Security</span>
<span class="cb" style="left:20.0px;top:419.0px;border-color:#cfd0d1"></span>
<span class="t" style="left:42.8px;top:418.9px;font-size:15px;color:#e9e9ea;transform:scaleX(1.048);">Attack Surface Status</span>
<div class="b" style="left:0px;top:444px;width:349.5px;height:1px;background:#86878a"></div>
<button class="b" style="left:190px;top:456px;width:65.70000000000005px;height:30.5px;border:1px solid #2d68a6;border-radius:16px;box-sizing:border-box"><span class="t" style="left:8.9px;top:8.8px;font-size:12.5px;font-weight:700;-webkit-text-stroke:0;color:#3d9eff;transform:scaleX(1.146);">Cancel</span></button>
<button class="b" style="left:262px;top:456px;width:75px;height:30.5px;background:#3d9eff;border-radius:16px;box-shadow:0 2px 3px rgba(0,0,0,.4)"><span class="t" style="left:10.1px;top:9.8px;font-size:12.5px;font-weight:700;-webkit-text-stroke:0;color:#10161d;transform:scaleX(1.156);">Confirm</span></button>
</div>
<svg class="i" style="left:0;top:0;width:1913px;height:904px" viewBox="0 0 1913 904" fill="none" stroke="#ec1c24">
<rect x="253.500" y="67.500" width="1536.500" height="56.800" stroke-width="1.100"/>
<rect x="1073.500" y="305" width="691" height="557.500" stroke-width="3"/>
<path d="M317.800 96.500 L427.700 71.400 V83.400 H536.400 V108.800 H427.700 V121.600 Z" stroke-width="2.200"/>
<path d="M244.200 548.500 L344.200 523.200 V535.500 H445.800 V560.400 H344.200 V573.700 Z" stroke-width="1"/>
<path d="M1062.700 571.500 L953 542.500 V556.500 H842.200 V585.400 H953 V600.400 Z" stroke-width="1"/>
</svg>
<span class="t" style="left:375.2px;top:87.9px;font-size:14px;transform:scaleX(1.011);-webkit-text-stroke:0;">Facets and Filters</span>
<span class="t" style="left:299.4px;top:542.0px;font-size:14px;transform:scaleX(1.060);-webkit-text-stroke:0;">Navigation Menu</span>
<span class="t" style="left:859.9px;top:562.9px;font-size:14px;transform:scaleX(1.023);-webkit-text-stroke:0;">Customize Columns</span>
</body></html>
